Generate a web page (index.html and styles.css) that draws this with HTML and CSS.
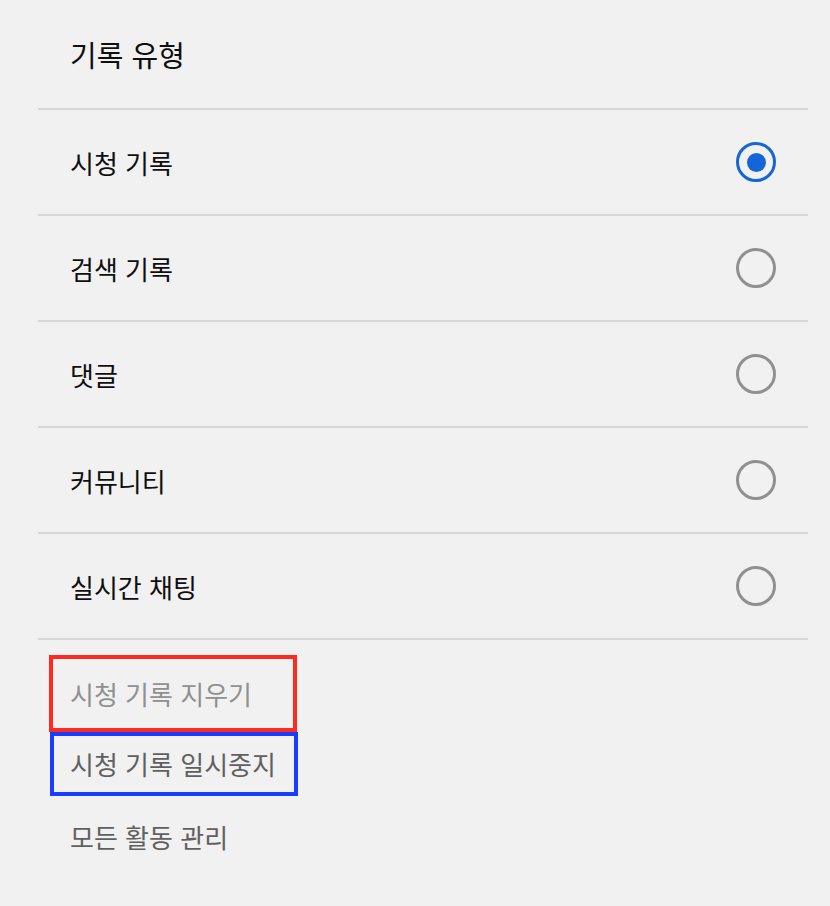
FILE: index.html
```html
<!DOCTYPE html>
<html lang="ko">
<head>
<meta charset="utf-8">
<link rel="stylesheet" href="styles.css">
</head>
<body>
<div class="panel">
  <h2 class="title">기록 유형</h2>
  <ul class="options">
    <li class="option"><span class="label">시청 기록</span><span class="radio checked"></span></li>
    <li class="option"><span class="label">검색 기록</span><span class="radio"></span></li>
    <li class="option"><span class="label">댓글</span><span class="radio"></span></li>
    <li class="option"><span class="label">커뮤니티</span><span class="radio"></span></li>
    <li class="option"><span class="label">실시간 채팅</span><span class="radio"></span></li>
  </ul>
  <div class="links">
    <div class="link disabled boxed-red">시청 기록 지우기</div>
    <div class="link boxed-blue">시청 기록 일시중지</div>
    <div class="link plain">모든 활동 관리</div>
  </div>
</div>
</body>
</html>
```
FILE: styles.css
```css
html, body {
  margin: 0;
  padding: 0;
  background: #f1f1f1;
  font-family: "Noto Sans CJK KR", "Noto Sans", sans-serif;
}
.panel {
  width: 830px;
  height: 906px;
  box-sizing: border-box;
  padding: 0 22px 0 38px;
}
.title {
  margin: 0;
  height: 110px;
  box-sizing: border-box;
  padding: 34px 0 0 32px;
  font-size: 29px;
  line-height: 40px;
  font-weight: 400;
  color: #0f0f0f;
  border-bottom: 2px solid #d6d6d6;
}
.options {
  list-style: none;
  margin: 0;
  padding: 0;
}
.option {
  height: 104px;
  display: flex;
  align-items: center;
  justify-content: space-between;
  padding: 0 32px;
  border-bottom: 2px solid #d6d6d6;
}
.label {
  font-size: 26px;
  color: #0f0f0f;
}
.radio {
  width: 40px;
  height: 40px;
  box-sizing: border-box;
  border: 3.5px solid #909090;
  border-radius: 50%;
  position: relative;
}
.radio.checked {
  border-color: #1565d8;
}
.radio.checked::after {
  content: "";
  position: absolute;
  left: 50%;
  top: 50%;
  width: 19px;
  height: 19px;
  margin: -9.5px 0 0 -9.5px;
  border-radius: 50%;
  background: #1565d8;
}
.links {
  padding-top: 15px;
  display: flex;
  flex-direction: column;
  align-items: flex-start;
}
.link {
  font-size: 26px;
  color: #606060;
  box-sizing: border-box;
}
.boxed-red {
  margin-left: 11px;
  width: 248px;
  height: 77px;
  line-height: 69px;
  padding-left: 17px;
  border: 4px solid #ff2a1f;
  color: #909090;
}
.boxed-blue {
  margin-left: 12px;
  width: 248px;
  height: 64px;
  line-height: 56px;
  padding-left: 16px;
  border: 4px solid #1a3cff;
}
.plain {
  margin-top: 10px;
  padding-left: 32px;
  line-height: 62px;
}
```
